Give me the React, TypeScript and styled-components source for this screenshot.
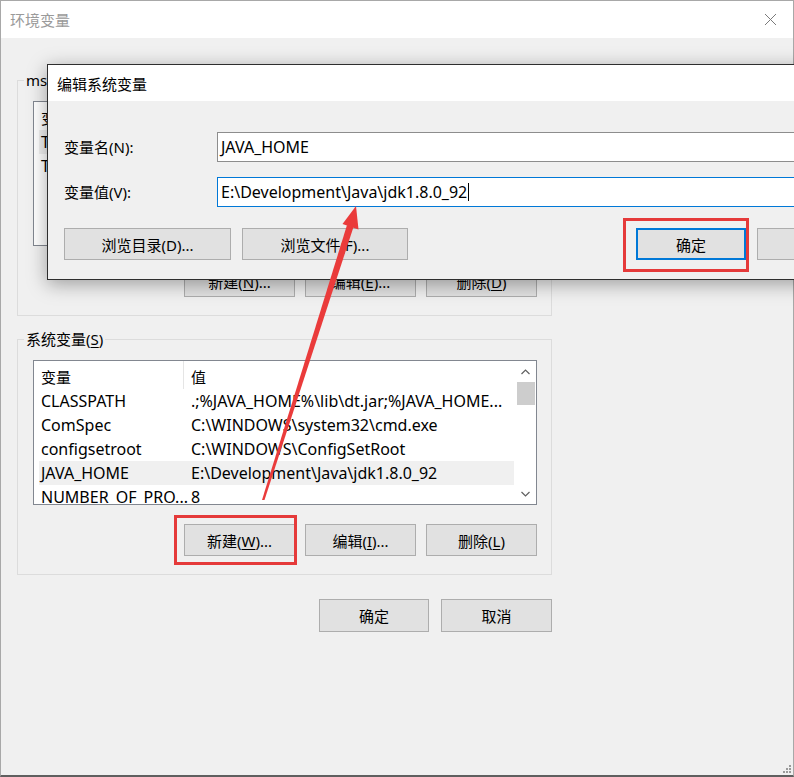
import React from 'react'
import styled, { createGlobalStyle, css } from 'styled-components'

const GlobalStyle = createGlobalStyle`
  html, body {
    margin: 0;
    padding: 0;
    background: #ffffff;
  }
  body {
    font-family: "Noto Sans", "Noto Sans CJK SC", sans-serif;
    font-size: 15px;
    color: #000;
  }
`

type Mark = { t: number; r: number; b: number; l: number }

type VarRow = { name: string; value: string; selected?: boolean }

const userVars: VarRow[] = [
  { name: 'TEMP', value: '%USERPROFILE%\\AppData\\Local\\Temp', selected: true },
  { name: 'TMP', value: '%USERPROFILE%\\AppData\\Local\\Temp' },
]

const systemVars: VarRow[] = [
  { name: 'CLASSPATH', value: '.;%JAVA_HOME%\\lib\\dt.jar;%JAVA_HOME...' },
  { name: 'ComSpec', value: 'C:\\WINDOWS\\system32\\cmd.exe' },
  { name: 'configsetroot', value: 'C:\\WINDOWS\\ConfigSetRoot' },
  { name: 'JAVA_HOME', value: 'E:\\Development\\Java\\jdk1.8.0_92', selected: true },
  { name: 'NUMBER_OF_PRO...', value: '8' },
]

const Screen = styled.div`
  position: relative;
  width: 794px;
  height: 777px;
  overflow: hidden;
`

const EnvWindow = styled.div`
  box-sizing: border-box;
  width: 100%;
  height: 100%;
  display: flex;
  flex-direction: column;
  background: #f0f0f0;
  border: 1px solid #a8a8a8;
  border-bottom: 2px solid #5f5f5f;
`

const TitleBar = styled.div`
  flex: none;
  height: 37px;
  display: flex;
  align-items: center;
  justify-content: space-between;
  padding: 0 16px 0 9px;
  background: #ffffff;
`

const WindowTitle = styled.span`
  font-size: 15px;
  color: #9a9a9a;
`

const CloseIcon = styled.svg`
  width: 13px;
  height: 13px;
`

const Content = styled.div`
  display: flex;
  flex-direction: column;
  width: 535px;
  padding-left: 16px;
`

const Group = styled.fieldset<{ $top: number }>`
  box-sizing: border-box;
  width: 535px;
  margin: ${p => p.$top}px 0 0 0;
  padding: 11px 14px 18px 15px;
  border: 1px solid #dcdcdc;
  min-width: 0;
`

const Legend = styled.legend`
  margin-left: -9px;
  padding: 0 2px;
  line-height: 20px;
  font-size: 15px;
  color: #000;
`

const Key = styled.span`
  text-decoration: underline;
  text-underline-offset: 2px;
`

const ListBox = styled.div`
  box-sizing: border-box;
  height: 145px;
  display: flex;
  background: #ffffff;
  border: 1px solid #828790;
  overflow: hidden;
`

const ListBody = styled.div`
  flex: 1;
  min-width: 0;
  padding-top: 3px;
`

const HeaderRow = styled.div`
  display: grid;
  grid-template-columns: 145px 1fr;
  height: 25px;
  margin-left: 5px;
  align-items: center;
`

const HeaderCell = styled.div<{ $divider?: boolean }>`
  height: 100%;
  display: flex;
  align-items: center;
  padding-left: ${p => (p.$divider ? 2 : 7)}px;
  border-right: ${p => (p.$divider ? '1px solid #e5e5e5' : 'none')};
  margin-top: -4px;
  padding-top: 4px;
`

const Row = styled.div<{ $selected?: boolean }>`
  display: grid;
  grid-template-columns: 145px 1fr;
  height: 24px;
  margin: 0 1px 0 5px;
  align-items: center;
  background: ${p => (p.$selected ? '#f0f0f0' : 'transparent')};
  white-space: nowrap;
`

const Cell = styled.div<{ $first?: boolean }>`
  overflow: ${p => (p.$first ? 'visible' : 'hidden')};
  padding-left: ${p => (p.$first ? 2 : 7)}px;
  font-size: 16px;
`

const ScrollBar = styled.div`
  flex: none;
  width: 21px;
  display: flex;
  flex-direction: column;
  background: #ffffff;
`

const ScrollArrow = styled.div`
  height: 21px;
  display: flex;
  align-items: center;
  justify-content: center;
`

const ScrollThumb = styled.div`
  height: 23px;
  margin: 0 1px 0 2px;
  background: #cdcdcd;
`

const ScrollTrack = styled.div`
  flex: 1;
`

const ButtonRow = styled.div<{ $top: number; $gap: number }>`
  display: flex;
  justify-content: flex-end;
  gap: ${p => p.$gap}px;
  margin-top: ${p => p.$top}px;
`

const Button = styled.button<{ $w: number; $h?: number; $primary?: boolean; $mark?: Mark }>`
  position: relative;
  flex: none;
  box-sizing: border-box;
  width: ${p => p.$w}px;
  height: ${p => p.$h ?? 32}px;
  padding: 0;
  font-family: inherit;
  font-size: 15px;
  color: #000;
  background: #e1e1e1;
  border: ${p => (p.$primary ? '2px solid #0078d7' : '1px solid #adadad')};
  white-space: nowrap;
  ${p =>
    p.$mark &&
    css`
      &::after {
        content: '';
        position: absolute;
        top: ${-p.$mark.t}px;
        right: ${-p.$mark.r}px;
        bottom: ${-p.$mark.b}px;
        left: ${-p.$mark.l}px;
        border: 3px solid #e53a3a;
        pointer-events: none;
      }
    `}
`

const Grip = styled.svg`
  position: absolute;
  right: 3px;
  bottom: 4px;
  width: 10px;
  height: 10px;
`

/* edit dialog floating over the env window */
const Dialog = styled.div`
  position: absolute;
  left: 47px;
  top: 64px;
  box-sizing: border-box;
  width: 800px;
  height: 216px;
  display: flex;
  flex-direction: column;
  border: 1px solid #2e2e2e;
  background: #f0f0f0;
  box-shadow: 0 4px 18px rgba(0, 0, 0, 0.35);
`

const DialogTitle = styled.div`
  flex: none;
  height: 36px;
  display: flex;
  align-items: center;
  padding-left: 9px;
  background: #ffffff;
  font-size: 15px;
`

const DialogBody = styled.div`
  display: flex;
  flex-direction: column;
  gap: 15px;
  padding: 31px 0 0 16px;
`

const FieldRow = styled.div`
  display: flex;
  align-items: center;
`

const FieldLabel = styled.div`
  flex: none;
  width: 153px;
  font-size: 15px;
  margin-top: -2px;
`

const TextBox = styled.div<{ $focused?: boolean }>`
  flex: 1;
  box-sizing: border-box;
  height: 30px;
  display: flex;
  align-items: center;
  padding-left: 3px;
  background: #ffffff;
  border: 1px solid ${p => (p.$focused ? '#0078d7' : '#8d8d8d')};
  border-right: none;
  font-size: 16px;
  white-space: nowrap;
`

const Caret = styled.span`
  display: inline-block;
  width: 1px;
  height: 18px;
  margin-left: 1px;
  background: #000;
`

const DialogButtons = styled.div`
  display: flex;
  gap: 11px;
  margin-top: 6px;
`

const ActionGroup = styled.div`
  display: flex;
  gap: 11px;
  margin-left: 217px;
`

const ArrowLayer = styled.svg`
  position: absolute;
  left: 0;
  top: 0;
  width: 794px;
  height: 777px;
  pointer-events: none;
`

const Chevron = ({ up }: { up?: boolean }) => (
  <svg width="9" height="6" viewBox="0 0 9 6">
    <polyline
      points={up ? '0.5,5 4.5,1 8.5,5' : '0.5,1 4.5,5 8.5,1'}
      fill="none"
      stroke="#606060"
      strokeWidth="1.2"
    />
  </svg>
)

const VarList = ({ rows }: { rows: VarRow[] }) => (
  <ListBox>
    <ListBody>
      <HeaderRow>
        <HeaderCell $divider>变量</HeaderCell>
        <HeaderCell>值</HeaderCell>
      </HeaderRow>
      {rows.map(r => (
        <Row key={r.name} $selected={r.selected}>
          <Cell $first>{r.name}</Cell>
          <Cell>{r.value}</Cell>
        </Row>
      ))}
    </ListBody>
    <ScrollBar>
      <ScrollArrow>
        <Chevron up />
      </ScrollArrow>
      <ScrollThumb />
      <ScrollTrack />
      <ScrollArrow>
        <Chevron />
      </ScrollArrow>
    </ScrollBar>
  </ListBox>
)

export default function App() {
  return (
    <Screen>
      <GlobalStyle />
      <EnvWindow>
        <TitleBar>
          <WindowTitle>环境变量</WindowTitle>
          <CloseIcon viewBox="0 0 13 13">
            <path d="M1 1 L12 12 M12 1 L1 12" stroke="#7a7a7a" strokeWidth="1" />
          </CloseIcon>
        </TitleBar>
        <Content>
          <Group $top={32}>
            <Legend>mshi 的用户变量(<Key>U</Key>)</Legend>
            <VarList rows={userVars} />
            <ButtonRow $top={19} $gap={10}>
              <Button $w={111}>新建(<Key>N</Key>)...</Button>
              <Button $w={111}>编辑(<Key>E</Key>)...</Button>
              <Button $w={111}>删除(<Key>D</Key>)</Button>
            </ButtonRow>
          </Group>
          <Group $top={13}>
            <Legend>系统变量(<Key>S</Key>)</Legend>
            <VarList rows={systemVars} />
            <ButtonRow $top={19} $gap={10}>
              <Button $w={111} $mark={{ t: 10, r: 3, b: 10, l: 11 }}>
                新建(<Key>W</Key>)...
              </Button>
              <Button $w={111}>编辑(<Key>I</Key>)...</Button>
              <Button $w={111}>删除(<Key>L</Key>)</Button>
            </ButtonRow>
          </Group>
          <ButtonRow $top={24} $gap={12}>
            <Button $w={110} $h={33}>确定</Button>
            <Button $w={111} $h={33}>取消</Button>
          </ButtonRow>
        </Content>
      </EnvWindow>
      <Grip viewBox="0 0 10 10">
        <g fill="#9a9a9a">
          <rect x="8" y="2" width="2" height="2" />
          <rect x="5" y="5" width="2" height="2" />
          <rect x="8" y="5" width="2" height="2" />
          <rect x="2" y="8" width="2" height="2" />
          <rect x="5" y="8" width="2" height="2" />
          <rect x="8" y="8" width="2" height="2" />
        </g>
      </Grip>

      <Dialog>
        <DialogTitle>编辑系统变量</DialogTitle>
        <DialogBody>
          <FieldRow>
            <FieldLabel>变量名(N):</FieldLabel>
            <TextBox>JAVA_HOME</TextBox>
          </FieldRow>
          <FieldRow>
            <FieldLabel>变量值(V):</FieldLabel>
            <TextBox $focused>
              E:\Development\Java\jdk1.8.0_92
              <Caret />
            </TextBox>
          </FieldRow>
          <DialogButtons>
            <Button $w={167}>浏览目录(D)...</Button>
            <Button $w={166}>浏览文件(F)...</Button>
            <ActionGroup>
              <Button $w={110} $primary $mark={{ t: 12, r: 5, b: 14, l: 15 }}>
                确定
              </Button>
              <Button $w={110}>取消</Button>
            </ActionGroup>
          </DialogButtons>
        </DialogBody>
      </Dialog>

      <ArrowLayer viewBox="0 0 794 777">
        <polygon points="262,500 264.5,500 353.5,227 347,225" fill="#ea3b3b" />
        <polygon points="356,206 342.5,224 358.5,229.5" fill="#ea3b3b" />
      </ArrowLayer>
    </Screen>
  )
}
